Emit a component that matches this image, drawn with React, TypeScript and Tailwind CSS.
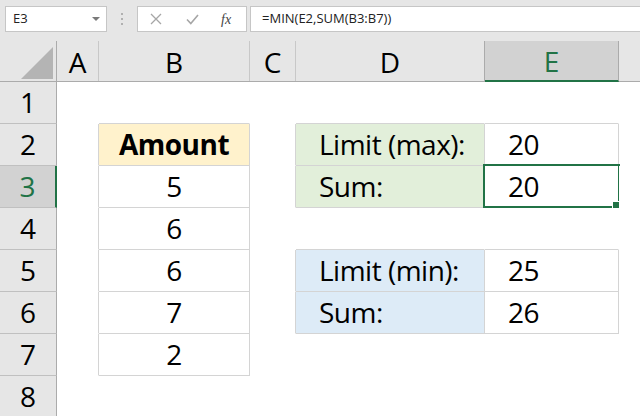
import React from 'react';

type C = { t?: string; bg?: string; r?: boolean; b?: boolean; center?: boolean; bold?: boolean; sel?: boolean };

const widths = ['w-[42px]', 'w-[151px]', 'w-[46px]', 'w-[189px]', 'w-[134px]', 'flex-1'];
const amber = 'bg-[#fff2cc]';
const green = 'bg-[#e2efda]';
const blue = 'bg-[#ddebf7]';

const rows: C[][] = [
  [{}, { b: true }, {}, { b: true }, { b: true }, {}],
  [
    { r: true },
    { t: 'Amount', bg: amber, r: true, b: true, center: true, bold: true },
    { r: true },
    { t: 'Limit (max):', bg: green, r: true, b: true },
    { t: '20', r: true, b: true },
    {},
  ],
  [
    { r: true },
    { t: '5', r: true, b: true, center: true },
    { r: true },
    { t: 'Sum:', bg: green, r: true, b: true },
    { t: '20', r: true, b: true, sel: true },
    {},
  ],
  [{ r: true }, { t: '6', r: true, b: true, center: true }, {}, { b: true }, { b: true }, {}],
  [
    { r: true },
    { t: '6', r: true, b: true, center: true },
    { r: true },
    { t: 'Limit (min):', bg: blue, r: true, b: true },
    { t: '25', r: true, b: true },
    {},
  ],
  [
    { r: true },
    { t: '7', r: true, b: true, center: true },
    { r: true },
    { t: 'Sum:', bg: blue, r: true, b: true },
    { t: '26', r: true, b: true },
    {},
  ],
  [{ r: true }, { t: '2', r: true, b: true, center: true }, {}, {}, {}, {}],
  [{}, {}, {}, {}, {}, {}],
];

function Cell({ c, w }: { c: C; w: string }) {
  return (
    <div
      className={[
        'relative h-full shrink-0 border-r border-b leading-[41px] whitespace-nowrap tracking-[-0.5px]',
        w,
        c.bg ?? 'bg-white',
        c.r ? 'border-r-[#d4d4d4]' : 'border-r-transparent',
        c.b ? 'border-b-[#d4d4d4]' : 'border-b-transparent',
        c.center ? 'text-center' : 'pl-[23px]',
        c.bold ? 'font-bold' : 'font-normal',
      ].join(' ')}
    >
      {c.t}
      {c.sel && (
        <div className="pointer-events-none absolute left-[-2px] top-[-2px] h-[44px] w-[137px] border-2 border-[#217346]">
          <div className="absolute left-[127px] top-[35px] h-[8px] w-[8px] border border-white bg-[#217346]" />
        </div>
      )}
    </div>
  );
}

export default function App() {
  const font = { fontFamily: '"Open Sans", "Noto Sans", sans-serif' };
  return (
    <div className="h-[416px] w-[640px] overflow-hidden bg-white text-black" style={font}>
      {/* formula bar */}
      <div className="flex h-[41px] items-start bg-[#e6e6e6] pt-[6px]">
        <div className="ml-[5px] flex h-[26px] w-[102px] items-center justify-between border border-[#c6c6c6] bg-white pl-[7px] pr-[6px] text-[13px] text-[#222]">
          <span>E3</span>
          <svg width="8" height="4" viewBox="0 0 8 4">
            <path d="M0 0 H8 L4 4 Z" fill="#7a7a7a" />
          </svg>
        </div>
        <div className="flex h-[26px] w-[30px] flex-col items-center justify-center gap-[3px]">
          <div className="h-[2px] w-[2px] bg-[#b0b0b0]" />
          <div className="h-[2px] w-[2px] bg-[#b0b0b0]" />
          <div className="h-[2px] w-[2px] bg-[#b0b0b0]" />
        </div>
        <div className="flex h-[26px] w-[110px] items-center border border-[#c6c6c6] bg-white">
          <svg className="ml-[12px]" width="12" height="12" viewBox="0 0 12 12">
            <path d="M1 1 L11 11 M11 1 L1 11" stroke="#a6a6a6" strokeWidth="1.3" fill="none" />
          </svg>
          <svg className="ml-[24px]" width="13" height="11" viewBox="0 0 13 11">
            <path d="M1 5.5 L4.8 9.5 L12 1" stroke="#a6a6a6" strokeWidth="1.6" fill="none" />
          </svg>
          <span
            className="ml-[22px] text-[14px] italic text-[#444]"
            style={{ fontFamily: '"Liberation Serif", "DejaVu Serif", serif' }}
          >
            fx
          </span>
        </div>
        <div className="ml-[3px] mr-[-2px] flex h-[26px] flex-1 items-center border border-[#c6c6c6] bg-white pl-[11px] text-[13px] text-[#222]">
          =MIN(E2,SUM(B3:B7))
        </div>
      </div>

      {/* column headers */}
      <div className="flex h-[41px] border-b border-b-[#ababab] bg-[#e6e6e6] text-[28px] leading-[40px]">
        <div className="relative w-[57px] shrink-0 border-r border-r-[#ababab]">
          <svg className="absolute left-[21px] top-[6px]" width="32" height="32" viewBox="0 0 32 32">
            <path d="M32 0 V32 H0 Z" fill="#b4b4b4" />
          </svg>
        </div>
        <div className="w-[42px] shrink-0 border-r border-r-[#c8c8c8] pt-px text-center">A</div>
        <div className="w-[151px] shrink-0 border-r border-r-[#c8c8c8] pt-px text-center">B</div>
        <div className="w-[46px] shrink-0 border-r border-r-[#c8c8c8] pt-px text-center">C</div>
        <div className="w-[189px] shrink-0 border-r border-r-[#ababab] pt-px text-center">D</div>
        <div className="mb-[-1px] w-[134px] shrink-0 border-r border-b-2 border-r-[#ababab] border-b-[#217346] bg-[#d2d2d2] pt-px text-center leading-[39px] text-[#217346]">
          E
        </div>
        <div className="flex-1" />
      </div>

      {/* rows */}
      {rows.map((row, i) => {
        const active = i === 2;
        return (
          <div key={i} className="flex h-[42px] text-[28px]">
            <div
              className={
                active
                  ? 'h-full w-[57px] shrink-0 border-r-2 border-b border-r-[#217346] border-b-[#c0c0c0] bg-[#d2d2d2] text-center leading-[41px] text-[#217346]'
                  : 'h-full w-[57px] shrink-0 border-r border-b border-r-[#ababab] border-b-[#c0c0c0] bg-[#e6e6e6] text-center leading-[41px]'
              }
            >
              {i + 1}
            </div>
            {row.map((c, j) => (
              <Cell key={j} c={c} w={widths[j]} />
            ))}
          </div>
        );
      })}
    </div>
  );
}
